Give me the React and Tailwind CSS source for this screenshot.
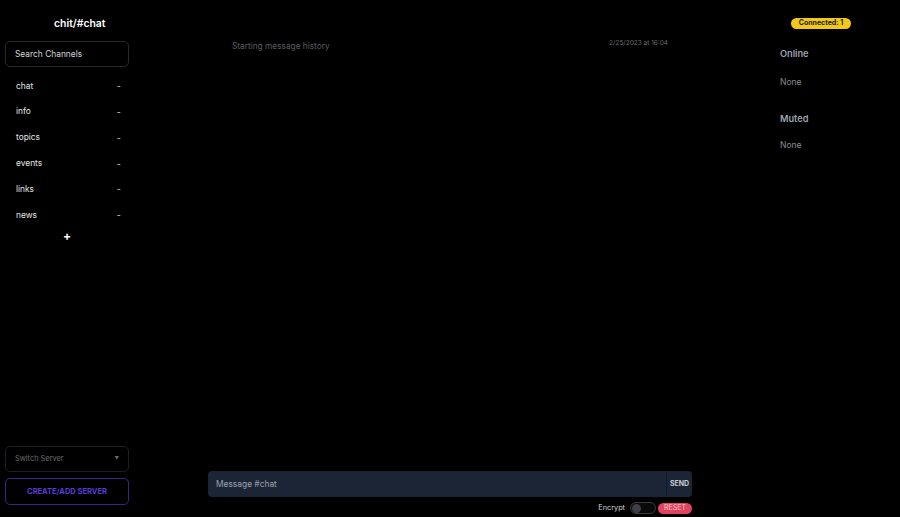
import React from "react";

const channels = ["chat", "info", "topics", "events", "links", "news"];

export default function App() {
  return (
    <div className="flex h-[517px] w-[900px] bg-black text-white overflow-hidden" style={{ fontFamily: "Inter, 'Noto Sans', sans-serif" }}>
      {/* Left sidebar */}
      <div className="flex w-[134px] flex-col px-[5px]">
        <div className="pt-[16px] pl-[49px] text-[10.4px] font-semibold leading-[15px] text-white">chit/#chat</div>
        <div className="mt-[10px] flex h-[26px] items-center rounded-[5px] border border-[#2a2a2a] px-[9px] text-[8.4px] text-[#d4d4d8]">
          Search Channels
        </div>
        <div className="mt-[6px] flex flex-col">
          {channels.map((c) => (
            <div key={c} className="flex h-[25.8px] items-center justify-between pl-[11px] pr-[8px] text-[8.4px] text-[#e5e5e5]">
              <span>{c}</span>
              <span className="text-[9px] text-[#d4d4d4]">-</span>
            </div>
          ))}
        </div>
        <div className="mt-[1px] pl-[58px] text-[12px] font-bold leading-[14px] text-white">+</div>
        <div className="flex-1" />
        <div className="flex h-[26px] items-center justify-between rounded-[5px] border border-[#1f1f23] px-[9px] text-[7.4px] text-[#6b6b73]">
          <span>Switch Server</span>
          <span className="text-[4.5px]">▼</span>
        </div>
        <div className="mb-[12px] mt-[6px] flex h-[27px] items-center justify-center rounded-[5px] border border-[#3b2580] text-[7.5px] font-bold text-[#5b3bd6]">
          CREATE/ADD SERVER
        </div>
      </div>

      {/* Main */}
      <div className="flex flex-1 flex-col">
        <div className="mx-auto w-[484px] flex-1 pt-[39px]">
          <div className="flex justify-between px-[24px]">
            <span className="mt-[1px] text-[8.3px] text-[#5b5b63]">Starting message history</span>
            <span className="text-[6.5px] text-[#6b6b73]">2/25/2023 at 16:04</span>
          </div>
        </div>
        <div className="mx-auto w-[484px]">
          <div className="flex h-[26px] overflow-hidden rounded-[4px] bg-[#1c2535]">
            <div className="flex flex-1 items-center pl-[8px] text-[8.4px] text-[#9ca3af]">Message #chat</div>
            <div className="flex w-[26px] items-center justify-center border-l border-[#121824] text-[7px] font-bold text-[#c7cbd4]">SEND</div>
          </div>
          <div className="mb-[3px] mt-[5px] flex items-center justify-end gap-[5px]">
            <span className="text-[7.3px] text-[#d4d4d8]">Encrypt</span>
            <div className="flex h-[12px] w-[26px] items-center rounded-full border border-[#3a3a3a] bg-[#0a0a0a] px-[1px]">
              <div className="h-[9px] w-[9px] rounded-full bg-[#3f3f46]" />
            </div>
            <div className="-ml-[3px] flex h-[11px] w-[34px] items-center justify-center rounded-full bg-[#e1445d] text-[7px] text-[#f8c5ce]">RESET</div>
          </div>
        </div>
      </div>

      {/* Right */}
      <div className="flex w-[134px] flex-col pl-[14px]">
        <div className="mt-[18px] ml-[11px] flex h-[11px] w-[60px] items-center justify-center rounded-full bg-[#f2c81b] text-[7px] font-bold text-[#1a1a1a]">
          Connected: 1
        </div>
        <div className="mt-[18px] text-[9.2px] font-semibold text-[#9ca3af]">Online</div>
        <div className="mt-[15px] text-[8.5px] text-[#8b8b93]">None</div>
        <div className="mt-[23px] text-[9.2px] font-semibold text-[#9ca3af]">Muted</div>
        <div className="mt-[14px] text-[8.5px] text-[#8b8b93]">None</div>
      </div>
    </div>
  );
}
